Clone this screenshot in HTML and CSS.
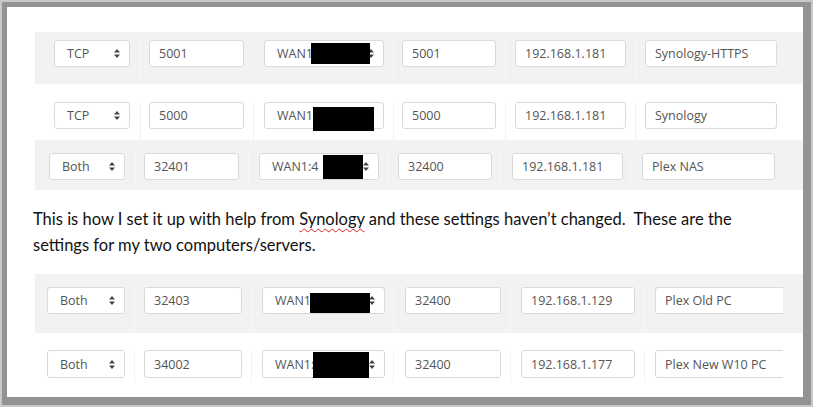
FILE: index.html
```html
<!DOCTYPE html>
<html>
<head>
<meta charset="utf-8">
<link rel="stylesheet" href="styles.css">
</head>
<body>
<div class="frame">
  <div class="page">
    <div class="block b1">
      <div class="row gray r1">
        <div class="cell c1"><div class="ctl sel s1">TCP<svg class="arr" width="6" height="9" viewBox="0 0 6 9"><path d="M3 0L6 3.4H0Z M3 9L0 5.6H6Z"/></svg></div></div>
        <div class="cell c2"><div class="ctl i2">5001</div></div>
        <div class="cell c3"><div class="ctl sel s3">WAN1<svg class="arr" width="6" height="9" viewBox="0 0 6 9"><path d="M3 0L6 3.4H0Z M3 9L0 5.6H6Z"/></svg><span class="redact rd1"></span></div></div>
        <div class="cell c4"><div class="ctl i4">5001</div></div>
        <div class="cell c5"><div class="ctl i5">192.168.1.181</div></div>
        <div class="cell c6"><div class="ctl i6">Synology-HTTPS</div></div>
      </div>
      <div class="row white r2">
        <div class="cell c1"><div class="ctl sel s1">TCP<svg class="arr" width="6" height="9" viewBox="0 0 6 9"><path d="M3 0L6 3.4H0Z M3 9L0 5.6H6Z"/></svg></div></div>
        <div class="cell c2"><div class="ctl i2">5000</div></div>
        <div class="cell c3"><div class="ctl sel s3">WAN1:<svg class="arr" width="6" height="9" viewBox="0 0 6 9"><path d="M3 0L6 3.4H0Z M3 9L0 5.6H6Z"/></svg><span class="redact rd2"></span></div></div>
        <div class="cell c4"><div class="ctl i4">5000</div></div>
        <div class="cell c5"><div class="ctl i5">192.168.1.181</div></div>
        <div class="cell c6"><div class="ctl i6">Synology</div></div>
      </div>
    </div>
    <div class="block b3">
      <div class="row gray r3">
        <div class="cell c1"><div class="ctl sel s1">Both<svg class="arr" width="6" height="9" viewBox="0 0 6 9"><path d="M3 0L6 3.4H0Z M3 9L0 5.6H6Z"/></svg></div></div>
        <div class="cell c2"><div class="ctl i2">32401</div></div>
        <div class="cell c3"><div class="ctl sel s3">WAN1:4<svg class="arr" width="6" height="9" viewBox="0 0 6 9"><path d="M3 0L6 3.4H0Z M3 9L0 5.6H6Z"/></svg><span class="redact rd3"></span></div></div>
        <div class="cell c4"><div class="ctl i4">32400</div></div>
        <div class="cell c5"><div class="ctl i5">192.168.1.181</div></div>
        <div class="cell c6"><div class="ctl i6">Plex NAS</div></div>
      </div>
    </div>
    <p class="note">This is how I set it up with help from <span class="spell">Synology</span> and these settings haven’t changed.&nbsp; These are the<br>settings for my two computers/servers.</p>
    <div class="block b4">
      <div class="row gray r4">
        <div class="cell c1"><div class="ctl sel s1">Both<svg class="arr" width="6" height="9" viewBox="0 0 6 9"><path d="M3 0L6 3.4H0Z M3 9L0 5.6H6Z"/></svg></div></div>
        <div class="cell c2"><div class="ctl i2">32403</div></div>
        <div class="cell c3"><div class="ctl sel s3">WAN1<svg class="arr" width="6" height="9" viewBox="0 0 6 9"><path d="M3 0L6 3.4H0Z M3 9L0 5.6H6Z"/></svg><span class="redact rd4"></span></div></div>
        <div class="cell c4"><div class="ctl i4">32400</div></div>
        <div class="cell c5"><div class="ctl i5">192.168.1.129</div></div>
        <div class="cell c6"><div class="ctl i6">Plex Old PC</div></div>
      </div>
      <div class="row white r5">
        <div class="cell c1"><div class="ctl sel s1">Both<svg class="arr" width="6" height="9" viewBox="0 0 6 9"><path d="M3 0L6 3.4H0Z M3 9L0 5.6H6Z"/></svg></div></div>
        <div class="cell c2"><div class="ctl i2">34002</div></div>
        <div class="cell c3"><div class="ctl sel s3">WAN1:<svg class="arr" width="6" height="9" viewBox="0 0 6 9"><path d="M3 0L6 3.4H0Z M3 9L0 5.6H6Z"/></svg><span class="redact rd5"></span></div></div>
        <div class="cell c4"><div class="ctl i4">32400</div></div>
        <div class="cell c5"><div class="ctl i5">192.168.1.177</div></div>
        <div class="cell c6"><div class="ctl i6">Plex New W10 PC</div></div>
      </div>
    </div>
  </div>
</div>
</body>
</html>
```
FILE: styles.css
```css
* { box-sizing: border-box; }
body {
  margin: 0;
  width: 813px;
  height: 407px;
  overflow: hidden;
  background: #c9c9c9;
}
.frame {
  margin: 2px 2px 0 2px;
  height: 403px;
  border-style: solid;
  border-color: #939393;
  border-width: 5px 8px 8px 5px;
  background: #fff;
  overflow: hidden;
}
.page { padding-top: 25px; }
.block { margin-left: 28px; }
.row { display: flex; }
.gray { background: #f2f2f2; }
.white { background: #fff; }
.cell { border-left: 1px solid transparent; overflow: hidden; }
.gray .cell + .cell { border-left-color: #f7f7f7; }
.white .cell + .cell { border-left-color: #f2f2f2; }

.ctl {
  height: 27px;
  border: 1px solid #dadada;
  border-radius: 3px;
  background: #fff;
  font-family: "Open Sans", "Noto Sans", sans-serif;
  font-size: 12.5px;
  color: #555;
  display: flex;
  align-items: center;
  padding-left: 9px;
  white-space: nowrap;
  position: relative;
}
.sel { padding-left: 12px; padding-right: 9px; }
.arr { margin-left: auto; fill: #444; flex: none; }
.redact { position: absolute; background: #000; }

/* block 1 */
.b1 .r1 { height: 52px; padding-top: 8px; }
.b1 .r2 { height: 56px; padding-top: 18px; }
.b1 .c1 { width: 105px; padding-left: 18px; }
.b1 .c2 { width: 113px; padding-left: 8px; }
.b1 .c3 { width: 140px; padding-left: 10px; }
.b1 .c4 { width: 112px; padding-left: 8px; }
.b1 .c5 { width: 130px; padding-left: 9px; }
.b1 .c6 { width: 148px; padding-left: 9px; }
.b1 .s1 { width: 76px; }
.b1 .i2 { width: 95px; }
.b1 .s3 { width: 120px; }
.b1 .i4 { width: 94px; }
.b1 .i5 { width: 111px; }
.b1 .i6 { width: 132px; }

/* block 3 */
.b3 .r3 { height: 50px; padding-top: 13px; }
.b3 .c1 { width: 100px; padding-left: 13px; }
.b3 .c2 { width: 113px; padding-left: 8px; }
.b3 .c3 { width: 140px; padding-left: 10px; }
.b3 .c4 { width: 112px; padding-left: 9px; }
.b3 .c5 { width: 130px; padding-left: 11px; }
.b3 .c6 { width: 148px; padding-left: 11px; }
.b3 .s1 { width: 76px; }
.b3 .i2 { width: 95px; }
.b3 .s3 { width: 120px; }
.b3 .i4 { width: 94px; }
.b3 .i5 { width: 111px; }
.b3 .i6 { width: 133px; }

/* block 4 */
.b4 .r4 { height: 59px; padding-top: 13px; }
.b4 .r5 { height: 50px; padding-top: 17px; }
.b4 .r5 .ctl { height: 28px; }
.b4 .c1 { width: 99px; padding-left: 11px; }
.b4 .c2 { width: 117px; padding-left: 9px; }
.b4 .c3 { width: 142px; padding-left: 10px; }
.b4 .c4 { width: 117px; padding-left: 11px; }
.b4 .c5 { width: 134px; padding-left: 10px; }
.b4 .c6 { width: 139px; padding-left: 10px; }
.b4 .s1 { width: 78px; }
.b4 .i2 { width: 98px; }
.b4 .s3 { width: 123px; }
.b4 .i4 { width: 96px; }
.b4 .i5 { width: 114px; }
.b4 .i6 { width: 150px; }

.rd1 { left: 46px; top: 2px; width: 59px; height: 21px; }
.rd2 { left: 48px; top: 4px; width: 61px; height: 24px; }
.rd3 { left: 63px; top: 1px; width: 40px; height: 24px; }
.rd4 { left: 47px; top: 5px; width: 60px; height: 20px; }
.rd5 { left: 50px; top: 1px; width: 56px; height: 26px; }

.note {
  margin: 16px 0 16px 26px;
  font-family: Lato, "Open Sans", sans-serif;
  font-size: 16.5px;
  line-height: 26px;
  color: #111;
}
.spell {
  text-decoration: underline wavy #d22;
  text-decoration-thickness: 1px;
  text-underline-offset: 3px;
}
```
